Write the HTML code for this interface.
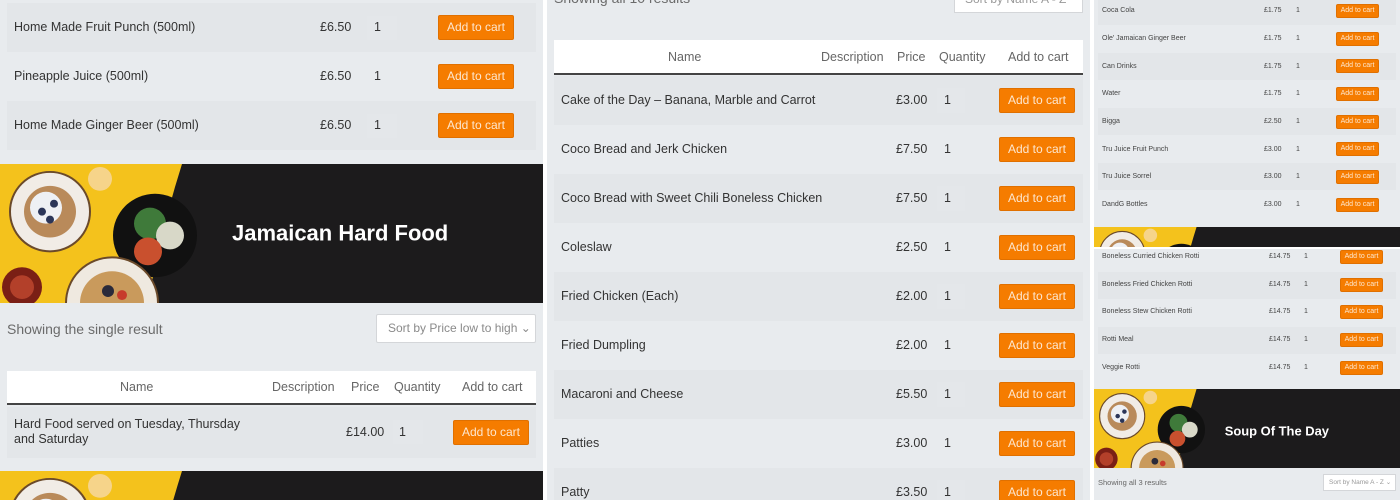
<!DOCTYPE html>
<html><head><meta charset="utf-8"><style>
*{margin:0;padding:0;box-sizing:border-box}
html,body{width:1400px;height:500px;overflow:hidden}
body{background:#fff;position:relative;font-family:"Liberation Sans",sans-serif;color:#333}
.p{position:absolute;background:#e8ebee;overflow:hidden}
.a{position:absolute;white-space:nowrap}
.r{position:absolute}
.btn{position:absolute;background:#f57c00;color:#fde7cf;border:1px solid #e07000;border-radius:2px;text-align:center}
.q{position:absolute;background:#e4e7ea}
.ban{position:absolute}
.w{position:absolute;overflow:hidden}
</style></head><body>
<svg width="0" height="0" style="position:absolute"><defs>
<g id="bimg">
<rect width="543" height="140" fill="#1c1b1c"/>
<path d="M0 0H182Q160 70 148 140H0Z" fill="#f4c21c"/>
<circle cx="50" cy="48" r="40" fill="#f1ece6" stroke="#6b4a2a" stroke-width="2"/>
<circle cx="50" cy="48" r="26" fill="#b98a5a"/><circle cx="46" cy="44" r="16" fill="#eef0f4"/>
<circle cx="42" cy="48" r="4" fill="#2b3558"/><circle cx="54" cy="40" r="4" fill="#2b3558"/><circle cx="50" cy="56" r="4" fill="#2b3558"/>
<circle cx="100" cy="15" r="12" fill="#f6d48a"/>
<circle cx="155" cy="72" r="42" fill="#111"/>
<circle cx="150" cy="60" r="16" fill="#3f7a3a"/><circle cx="170" cy="72" r="14" fill="#d8d8c8"/><circle cx="148" cy="88" r="14" fill="#c9502e"/>
<circle cx="112" cy="140" r="46" fill="#efe9e0" stroke="#6b4a2a" stroke-width="2"/>
<circle cx="112" cy="140" r="32" fill="#c99a5c"/><circle cx="108" cy="128" r="6" fill="#2a2a3a"/><circle cx="122" cy="132" r="5" fill="#c73b2b"/>
<circle cx="22" cy="124" r="20" fill="#7a1f15"/><circle cx="22" cy="124" r="12" fill="#b3402a"/>
</g></defs></svg>

<!-- LEFT PANEL -->
<div class="p" style="left:0;top:0;width:543px;height:500px;font-size:12.5px">
<div class="r" style="left:7px;top:3px;width:529px;height:49px;background:#e3e6e9"></div>
<div class="r" style="left:7px;top:101px;width:529px;height:49px;background:#e3e6e9"></div>
<div class="a" style="left:14px;top:20px">Home Made Fruit Punch (500ml)</div>
<div class="a" style="left:14px;top:69px">Pineapple Juice (500ml)</div>
<div class="a" style="left:14px;top:118px">Home Made Ginger Beer (500ml)</div>
<div class="a" style="left:320px;top:20px">£6.50</div>
<div class="a" style="left:320px;top:69px">£6.50</div>
<div class="a" style="left:320px;top:118px">£6.50</div>
<div class="q" style="left:367px;top:16px;width:30px;height:24px"></div>
<div class="a" style="left:374px;top:20px">1</div>
<div class="a" style="left:374px;top:69px">1</div>
<div class="q" style="left:367px;top:114px;width:30px;height:24px"></div>
<div class="a" style="left:374px;top:118px">1</div>
<div class="btn" style="left:438px;top:15px;width:76px;height:25px;font-size:12px;line-height:23px">Add to cart</div>
<div class="btn" style="left:438px;top:64px;width:76px;height:25px;font-size:12px;line-height:23px">Add to cart</div>
<div class="btn" style="left:438px;top:113px;width:76px;height:25px;font-size:12px;line-height:23px">Add to cart</div>

<svg class="ban" style="left:0;top:164px" width="543" height="139" viewBox="0 0 543 140" preserveAspectRatio="none"><use href="#bimg"/><text x="232" y="77" font-family="Liberation Sans,sans-serif" font-weight="bold" font-size="22" fill="#fff">Jamaican Hard Food</text></svg>

<div class="a" style="left:7px;top:321px;font-size:14px;color:#6b6b6b">Showing the single result</div>
<div class="r" style="left:376px;top:314px;width:160px;height:29px;background:#fff;border:1px solid #d4d6d9;border-radius:2px"></div>
<div class="a" style="left:388px;top:321px;font-size:12px;color:#8a8a8a">Sort by Price low to high ⌄</div>

<div class="r" style="left:7px;top:371px;width:529px;height:34px;background:#fff;border-bottom:2px solid #444"></div>
<div class="a" style="left:120px;top:380px;color:#666">Name</div>
<div class="a" style="left:272px;top:380px;color:#666">Description</div>
<div class="a" style="left:351px;top:380px;color:#666">Price</div>
<div class="a" style="left:394px;top:380px;color:#666">Quantity</div>
<div class="a" style="left:462px;top:380px;color:#666">Add to cart</div>
<div class="r" style="left:7px;top:407px;width:529px;height:51px;background:#e3e6e9"></div>
<div class="a" style="left:14px;top:417px;line-height:15px;white-space:normal;width:250px;font-size:12.5px">Hard Food served on Tuesday, Thursday and Saturday</div>
<div class="a" style="left:346px;top:425px">£14.00</div>
<div class="q" style="left:393px;top:420px;width:30px;height:24px"></div>
<div class="a" style="left:399px;top:425px">1</div>
<div class="btn" style="left:453px;top:420px;width:76px;height:25px;font-size:12px;line-height:23px">Add to cart</div>

<svg class="ban" style="left:0;top:471px" width="543" height="139" viewBox="0 0 543 140" preserveAspectRatio="none"><use href="#bimg"/></svg>
</div>

<!-- MIDDLE PANEL -->
<div class="p" style="left:547px;top:0;width:543px;height:500px;font-size:12.5px">
<div class="a" style="left:7px;top:-10px;font-size:14px;color:#6b6b6b">Showing all 10 results</div>
<div class="r" style="left:407px;top:-10px;width:129px;height:23px;background:#fff;border:1px solid #d4d6d9"></div>
<div class="a" style="left:418px;top:-8px;font-size:12px;color:#999">Sort by Name A - Z</div>
<div class="r" style="left:7px;top:40px;width:529px;height:35px;background:#fff;border-bottom:2px solid #444"></div>
<div class="a" style="left:121px;top:50px;color:#666">Name</div>
<div class="a" style="left:274px;top:50px;color:#666">Description</div>
<div class="a" style="left:350px;top:50px;color:#666">Price</div>
<div class="a" style="left:392px;top:50px;color:#666">Quantity</div>
<div class="a" style="left:461px;top:50px;color:#666">Add to cart</div>
<div class="r" style="left:7px;top:76px;width:529px;height:49px;background:#e3e6e9"></div>
<div class="r" style="left:7px;top:174px;width:529px;height:49px;background:#e3e6e9"></div>
<div class="r" style="left:7px;top:272px;width:529px;height:49px;background:#e3e6e9"></div>
<div class="r" style="left:7px;top:370px;width:529px;height:49px;background:#e3e6e9"></div>
<div class="r" style="left:7px;top:468px;width:529px;height:49px;background:#e3e6e9"></div>
<div class="a" style="left:14px;top:93px">Cake of the Day – Banana, Marble and Carrot</div>
<div class="a" style="left:14px;top:142px">Coco Bread and Jerk Chicken</div>
<div class="a" style="left:14px;top:191px">Coco Bread with Sweet Chili Boneless Chicken</div>
<div class="a" style="left:14px;top:240px">Coleslaw</div>
<div class="a" style="left:14px;top:289px">Fried Chicken (Each)</div>
<div class="a" style="left:14px;top:338px">Fried Dumpling</div>
<div class="a" style="left:14px;top:387px">Macaroni and Cheese</div>
<div class="a" style="left:14px;top:436px">Patties</div>
<div class="a" style="left:14px;top:485px">Patty</div>
<div class="a" style="left:349px;top:93px">£3.00</div>
<div class="a" style="left:349px;top:142px">£7.50</div>
<div class="a" style="left:349px;top:191px">£7.50</div>
<div class="a" style="left:349px;top:240px">£2.50</div>
<div class="a" style="left:349px;top:289px">£2.00</div>
<div class="a" style="left:349px;top:338px">£2.00</div>
<div class="a" style="left:349px;top:387px">£5.50</div>
<div class="a" style="left:349px;top:436px">£3.00</div>
<div class="a" style="left:349px;top:485px">£3.50</div>
<div class="q" style="left:390px;top:88px;width:28px;height:25px"></div>
<div class="q" style="left:390px;top:186px;width:28px;height:25px"></div>
<div class="q" style="left:390px;top:284px;width:28px;height:25px"></div>
<div class="q" style="left:390px;top:382px;width:28px;height:25px"></div>
<div class="q" style="left:390px;top:480px;width:28px;height:25px"></div>
<div class="a" style="left:397px;top:93px">1</div><div class="a" style="left:397px;top:142px">1</div><div class="a" style="left:397px;top:191px">1</div>
<div class="a" style="left:397px;top:240px">1</div><div class="a" style="left:397px;top:289px">1</div><div class="a" style="left:397px;top:338px">1</div>
<div class="a" style="left:397px;top:387px">1</div><div class="a" style="left:397px;top:436px">1</div><div class="a" style="left:397px;top:485px">1</div>
<div class="btn" style="left:452px;top:88px;width:76px;height:25px;font-size:12px;line-height:23px">Add to cart</div>
<div class="btn" style="left:452px;top:137px;width:76px;height:25px;font-size:12px;line-height:23px">Add to cart</div>
<div class="btn" style="left:452px;top:186px;width:76px;height:25px;font-size:12px;line-height:23px">Add to cart</div>
<div class="btn" style="left:452px;top:235px;width:76px;height:25px;font-size:12px;line-height:23px">Add to cart</div>
<div class="btn" style="left:452px;top:284px;width:76px;height:25px;font-size:12px;line-height:23px">Add to cart</div>
<div class="btn" style="left:452px;top:333px;width:76px;height:25px;font-size:12px;line-height:23px">Add to cart</div>
<div class="btn" style="left:452px;top:382px;width:76px;height:25px;font-size:12px;line-height:23px">Add to cart</div>
<div class="btn" style="left:452px;top:431px;width:76px;height:25px;font-size:12px;line-height:23px">Add to cart</div>
<div class="btn" style="left:452px;top:480px;width:76px;height:25px;font-size:12px;line-height:23px">Add to cart</div>
</div>

<!-- RIGHT PANEL TOP -->
<div class="p" style="left:1094px;top:0;width:306px;height:247px;font-size:7px;color:#444">
<div class="r" style="left:4px;top:0;width:298px;height:25px;background:#e3e6e9"></div>
<div class="r" style="left:4px;top:53px;width:298px;height:27px;background:#e3e6e9"></div>
<div class="r" style="left:4px;top:108px;width:298px;height:27px;background:#e3e6e9"></div>
<div class="r" style="left:4px;top:163px;width:298px;height:27px;background:#e3e6e9"></div>
<svg class="ban" style="left:0;top:227px" width="306" height="78" viewBox="0 0 543 140" preserveAspectRatio="none"><use href="#bimg"/></svg>
<div class="a" style="left:8px;top:7px">Coca Cola</div><div class="a" style="left:8px;top:35px">Ole' Jamaican Ginger Beer</div>
<div class="a" style="left:8px;top:63px">Can Drinks</div><div class="a" style="left:8px;top:90px">Water</div>
<div class="a" style="left:8px;top:118px">Bigga</div><div class="a" style="left:8px;top:146px">Tru Juice Fruit Punch</div>
<div class="a" style="left:8px;top:173px">Tru Juice Sorrel</div><div class="a" style="left:8px;top:201px">DandG Bottles</div>
<div class="a" style="left:170px;top:7px">£1.75</div><div class="a" style="left:170px;top:35px">£1.75</div><div class="a" style="left:170px;top:63px">£1.75</div><div class="a" style="left:170px;top:90px">£1.75</div>
<div class="a" style="left:170px;top:118px">£2.50</div><div class="a" style="left:170px;top:146px">£3.00</div><div class="a" style="left:170px;top:173px">£3.00</div><div class="a" style="left:170px;top:201px">£3.00</div>
<div class="a" style="left:202px;top:7px">1</div><div class="a" style="left:202px;top:35px">1</div><div class="a" style="left:202px;top:63px">1</div><div class="a" style="left:202px;top:90px">1</div>
<div class="a" style="left:202px;top:118px">1</div><div class="a" style="left:202px;top:146px">1</div><div class="a" style="left:202px;top:173px">1</div><div class="a" style="left:202px;top:201px">1</div>
<div class="btn" style="left:242px;top:4px;width:43px;height:14px;line-height:12px">Add to cart</div>
<div class="btn" style="left:242px;top:32px;width:43px;height:14px;line-height:12px">Add to cart</div>
<div class="btn" style="left:242px;top:59px;width:43px;height:14px;line-height:12px">Add to cart</div>
<div class="btn" style="left:242px;top:87px;width:43px;height:14px;line-height:12px">Add to cart</div>
<div class="btn" style="left:242px;top:115px;width:43px;height:14px;line-height:12px">Add to cart</div>
<div class="btn" style="left:242px;top:142px;width:43px;height:14px;line-height:12px">Add to cart</div>
<div class="btn" style="left:242px;top:170px;width:43px;height:14px;line-height:12px">Add to cart</div>
<div class="btn" style="left:242px;top:198px;width:43px;height:14px;line-height:12px">Add to cart</div>
</div>

<!-- RIGHT PANEL BOTTOM -->
<div class="p" style="left:1094px;top:249px;width:306px;height:251px;font-size:7px;color:#444">
<div class="r" style="left:4px;top:23px;width:298px;height:27px;background:#e3e6e9"></div>
<div class="r" style="left:4px;top:78px;width:298px;height:27px;background:#e3e6e9"></div>
<svg class="ban" style="left:0;top:140px" width="306" height="79" viewBox="0 0 543 140" preserveAspectRatio="none"><use href="#bimg"/><text x="232" y="82" font-family="Liberation Sans,sans-serif" font-weight="bold" font-size="23" fill="#fff">Soup Of The Day</text></svg>
<div class="a" style="left:4px;top:229px;font-size:7.5px;color:#666">Showing all 3 results</div>
<div class="r" style="left:229px;top:225px;width:73px;height:17px;background:#fff;border:1px solid #d4d6d9"></div>
<div class="a" style="left:235px;top:229px;font-size:6.5px;color:#999">Sort by Name A - Z ⌄</div>
<div class="a" style="left:8px;top:4px">Boneless Curried Chicken Rotti</div><div class="a" style="left:8px;top:32px">Boneless Fried Chicken Rotti</div>
<div class="a" style="left:8px;top:59px">Boneless Stew Chicken Rotti</div><div class="a" style="left:8px;top:87px">Rotti Meal</div><div class="a" style="left:8px;top:115px">Veggie Rotti</div>
<div class="a" style="left:175px;top:4px">£14.75</div><div class="a" style="left:175px;top:32px">£14.75</div><div class="a" style="left:175px;top:59px">£14.75</div><div class="a" style="left:175px;top:87px">£14.75</div><div class="a" style="left:175px;top:115px">£14.75</div>
<div class="a" style="left:210px;top:4px">1</div><div class="a" style="left:210px;top:32px">1</div><div class="a" style="left:210px;top:59px">1</div><div class="a" style="left:210px;top:87px">1</div><div class="a" style="left:210px;top:115px">1</div>
<div class="btn" style="left:246px;top:1px;width:43px;height:14px;line-height:12px">Add to cart</div>
<div class="btn" style="left:246px;top:29px;width:43px;height:14px;line-height:12px">Add to cart</div>
<div class="btn" style="left:246px;top:56px;width:43px;height:14px;line-height:12px">Add to cart</div>
<div class="btn" style="left:246px;top:84px;width:43px;height:14px;line-height:12px">Add to cart</div>
<div class="btn" style="left:246px;top:112px;width:43px;height:14px;line-height:12px">Add to cart</div>
</div>
</body></html>
